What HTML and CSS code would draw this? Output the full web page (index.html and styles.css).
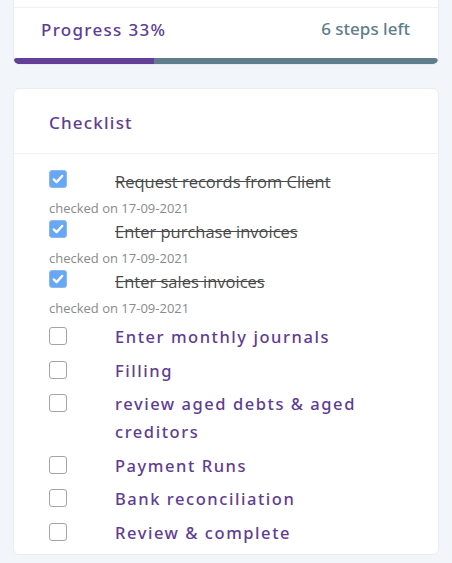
FILE: index.html
```html
<!DOCTYPE html>
<html>
<head>
<meta charset="utf-8">
<link rel="stylesheet" href="styles.css">
</head>
<body>
<div class="page">
  <section class="card progress-card">
    <div class="progress-top"></div>
    <div class="progress-head">
      <span class="progress-title">Progress 33%</span>
      <span class="progress-left">6 steps left</span>
    </div>
    <div class="bar"><div class="bar-fill" style="width:33%"></div></div>
  </section>

  <section class="card checklist-card">
    <header class="checklist-head">Checklist</header>
    <ul class="list">
      <li class="item done">
        <div class="row"><span class="box checked"><svg viewBox="0 0 18 18" width="18" height="18"><path d="M4.2 9.4l3.2 3.1 6.4-7" fill="none" stroke="#fff" stroke-width="2.6" stroke-linecap="round" stroke-linejoin="round"/></svg></span><span class="label">Request records from Client</span></div>
        <div class="date">checked on 17-09-2021</div>
      </li>
      <li class="item done">
        <div class="row"><span class="box checked"><svg viewBox="0 0 18 18" width="18" height="18"><path d="M4.2 9.4l3.2 3.1 6.4-7" fill="none" stroke="#fff" stroke-width="2.6" stroke-linecap="round" stroke-linejoin="round"/></svg></span><span class="label">Enter purchase invoices</span></div>
        <div class="date">checked on 17-09-2021</div>
      </li>
      <li class="item done">
        <div class="row"><span class="box checked"><svg viewBox="0 0 18 18" width="18" height="18"><path d="M4.2 9.4l3.2 3.1 6.4-7" fill="none" stroke="#fff" stroke-width="2.6" stroke-linecap="round" stroke-linejoin="round"/></svg></span><span class="label">Enter sales invoices</span></div>
        <div class="date">checked on 17-09-2021</div>
      </li>
      <li class="item todo"><div class="row"><span class="box"></span><span class="label">Enter monthly journals</span></div></li>
      <li class="item todo"><div class="row"><span class="box"></span><span class="label">Filling</span></div></li>
      <li class="item todo"><div class="row"><span class="box"></span><span class="label">review aged debts &amp; aged creditors</span></div></li>
      <li class="item todo"><div class="row"><span class="box"></span><span class="label">Payment Runs</span></div></li>
      <li class="item todo"><div class="row"><span class="box"></span><span class="label">Bank reconciliation</span></div></li>
      <li class="item todo"><div class="row"><span class="box"></span><span class="label">Review &amp; complete</span></div></li>
    </ul>
  </section>
</div>
</body>
</html>
```

FILE: styles.css
```css
* { box-sizing: border-box; }
html, body { margin: 0; padding: 0; }
body {
  background: #f2f5f9;
  font-family: "Open Sans", "Noto Sans", sans-serif;
  width: 452px;
  height: 563px;
  overflow: hidden;
}
.page {
  padding: 0 13px;
  display: flex;
  flex-direction: column;
  gap: 23px;
  margin-top: -20px;
}
.card {
  background: #fff;
  border: 1px solid #e8edf3;
  border-radius: 6px;
  overflow: hidden;
}
.progress-card { border-top-left-radius: 0; border-top-right-radius: 0; }
.progress-top {
  height: 27px;
  border-bottom: 1px solid #eef1f5;
}
.progress-head {
  display: flex;
  justify-content: space-between;
  align-items: flex-start;
  padding: 9px 28px 0 27px;
  height: 50px;
}
.progress-title, .progress-left, .checklist-head, .item.todo .label {
  font-family: "Noto Sans", "Open Sans", sans-serif;
  font-weight: 500;
}
.progress-title {
  color: #5f3d93;
  font-size: 17px;
  letter-spacing: 1.3px;
  line-height: 26px;
}
.progress-left {
  color: #607d8b;
  font-size: 17px;
  line-height: 24px;
}
.bar {
  height: 6px;
  background: #607d8b;
  border-radius: 3px;
  overflow: hidden;
}
.bar-fill {
  height: 100%;
  background: #643f97;
}
.checklist-card { height: 467px; }
.checklist-head {
  height: 65px;
  border-bottom: 1px solid #eef1f5;
  padding: 21px 35px 0;
  color: #5f3d93;
  font-size: 17px;
  letter-spacing: 1.2px;
  line-height: 26px;
}
.list {
  list-style: none;
  margin: 0;
  padding: 15px 35px 0;
}
.row {
  display: flex;
  align-items: flex-start;
}
.box {
  flex: none;
  width: 18px;
  height: 18px;
  border: 1.5px solid #a3a3ab;
  border-radius: 3px;
  margin-right: 48px;
  background: #fff;
}
.box.checked {
  background: #66a8f6;
  border: 1px solid #8fb8e8;
  display: flex;
  align-items: center;
  justify-content: center;
}
.item.done .row { height: 26px; }
.item.done .box { margin-top: 1px; }
.item.done .label {
  color: #4a4a4a;
  text-decoration: line-through;
  font-size: 16.5px;
  line-height: 26px;
}
.date {
  margin-top: 2px;
  color: #8a8a8a;
  font-size: 13px;
  line-height: 22px;
  height: 22px;
}
.item.done + .item.todo { margin-top: 4px; }
.item.todo { margin-bottom: 5.5px; }
.item.todo .box { margin-top: 4px; }
.item.todo .label {
  color: #5f3d93;
  font-size: 16.5px;
  letter-spacing: 1.55px;
  line-height: 28px;
}
```
